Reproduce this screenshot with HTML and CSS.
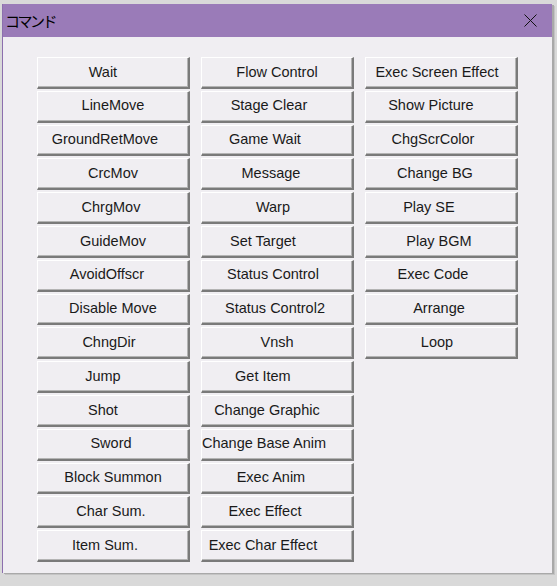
FILE: index.html
```html
<!DOCTYPE html>
<html lang="ja">
<head>
<meta charset="utf-8">
<title>コマンド</title>
<link rel="stylesheet" href="styles.css">
</head>
<body>
<div class="desktop">
  <div class="window">
    <div class="titlebar">
      <span class="title">コマンド</span>
      <span class="close">
        <svg width="13" height="13" viewBox="0 0 13 13"><path d="M0.5 0.5 L12.5 12.5 M12.5 0.5 L0.5 12.5" stroke="#111" stroke-width="1" fill="none"/></svg>
      </span>
    </div>
    <div class="body">
      <div class="grid">
        <button class="btn">Wait     </button>
        <button class="btn">LineMove</button>
        <button class="btn">GroundRetMove    </button>
        <button class="btn">CrcMov</button>
        <button class="btn">ChrgMov </button>
        <button class="btn">GuideMov</button>
        <button class="btn">AvoidOffscr   </button>
        <button class="btn">Disable Move</button>
        <button class="btn">ChngDir  </button>
        <button class="btn">Jump     </button>
        <button class="btn">Shot     </button>
        <button class="btn">Sword </button>
        <button class="btn">Block Summon</button>
        <button class="btn">Char Sum. </button>
        <button class="btn">Item Sum.    </button>

        <button class="btn">Flow Control</button>
        <button class="btn">Stage Clear    </button>
        <button class="btn">Game Wait      </button>
        <button class="btn">Message   </button>
        <button class="btn">Warp  </button>
        <button class="btn">Set Target       </button>
        <button class="btn">Status Control  </button>
        <button class="btn">Status Control2 </button>
        <button class="btn">Vnsh</button>
        <button class="btn">Get Item       </button>
        <button class="btn">Change Graphic     </button>
        <button class="btn">Change Base Anim       </button>
        <button class="btn">Exec Anim   </button>
        <button class="btn">Exec Effect      </button>
        <button class="btn">Exec Char Effect       </button>

        <button class="btn">Exec Screen Effect  </button>
        <button class="btn">Show Picture     </button>
        <button class="btn">ChgScrColor    </button>
        <button class="btn">Change BG   </button>
        <button class="btn">Play SE      </button>
        <button class="btn">Play BGM </button>
        <button class="btn">Exec Code    </button>
        <button class="btn">Arrange </button>
        <button class="btn">Loop  </button>
      </div>
    </div>
  </div>
</div>
</body>
</html>
```

FILE: styles.css
```css
html, body {
  margin: 0;
  padding: 0;
}
body {
  background: #d9d9d9;
  width: 557px;
  height: 586px;
  overflow: hidden;
}
.desktop {
  padding: 4px 0 0 2px;
}
.window {
  width: 550px;
  height: 569px;
  border-left: 1px solid #8c6fae;
  box-shadow: 2px 1px 0 #a9a9a9, 3px 2px 0 #c4c4c4;
  display: flex;
  flex-direction: column;
  box-sizing: border-box;
}
.titlebar {
  height: 33px;
  background: #9a7bb8;
  display: flex;
  align-items: center;
  justify-content: space-between;
  padding: 0 15px 0 2px;
  flex: none;
}
.title {
  font-family: "Noto Sans CJK JP", "Noto Sans", sans-serif;
  font-size: 15px;
  color: #000;
  letter-spacing: -2.5px;
}
.close {
  display: flex;
  width: 13px;
  height: 13px;
}
.body {
  flex: 1;
  background: #f0eef2;
  padding: 20px 0 0 34px;
}
.grid {
  display: grid;
  grid-template-columns: repeat(3, 153px);
  grid-template-rows: repeat(15, 31.8px);
  grid-auto-flow: column;
  column-gap: 11px;
  row-gap: 2px;
}
.btn {
  margin: 0;
  padding: 0 0 1px;
  background: #f0eef2;
  border-style: solid;
  border-width: 1px 2px 2px 1px;
  border-color: #ffffff #7a7a7a #7a7a7a #ffffff;
  box-shadow: inset -1px -1px 0 #b4b4b4;
  font-family: "Liberation Sans", Arial, sans-serif;
  font-size: 14.5px;
  color: #1a1a1a;
  white-space: pre;
  text-align: center;
  overflow: hidden;
  line-height: 1;
}
```
